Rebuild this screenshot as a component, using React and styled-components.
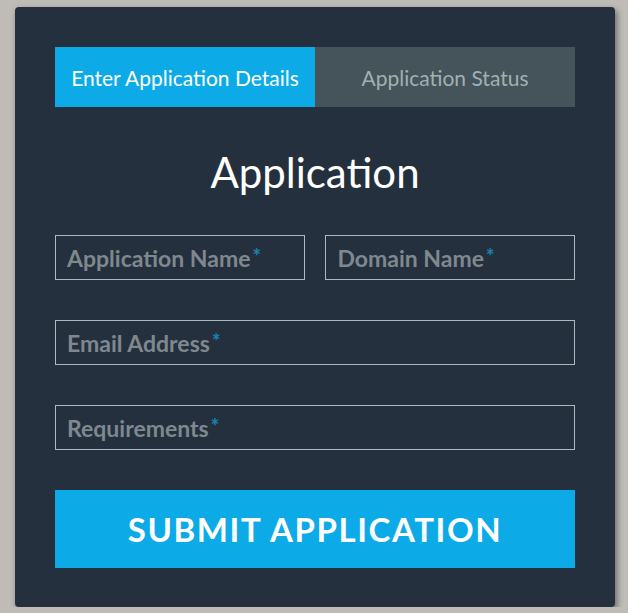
import React from 'react';
import styled, { createGlobalStyle } from 'styled-components';

const GlobalStyle = createGlobalStyle`
  body {
    margin: 0;
    background: #bfbbb7;
    font-family: Lato, "Liberation Sans", sans-serif;
  }
`;

const Card = styled.div`
  box-sizing: border-box;
  width: 600px;
  height: 600px;
  margin: 7px 0 0 15px;
  padding: 40px;
  background: #24303d;
  border-radius: 4px;
  box-shadow: 2px 3px 6px rgba(0, 0, 0, 0.45);
`;

const Tabs = styled.div`
  display: flex;
  height: 60px;
`;

const Tab = styled.button`
  flex: 1;
  border: none;
  margin: 0;
  padding: 0;
  font-family: Lato, sans-serif;
  font-size: 21px;
  background: ${(p) => (p.$active ? '#0cabe8' : '#45535b')};
  color: ${(p) => (p.$active ? '#ffffff' : '#a0b1b0')};
  cursor: pointer;
`;

const Title = styled.h1`
  margin: 45px 0 43px;
  font-family: Lato, sans-serif;
  font-weight: 400;
  font-size: 42px;
  line-height: 40px;
  color: #ffffff;
  text-align: center;
`;

const Row = styled.div`
  display: flex;
  justify-content: space-between;
  margin-bottom: 40px;
`;

const Field = styled.label`
  position: relative;
  display: block;
  width: ${(p) => (p.$half ? '48%' : '100%')};
  height: 45px;
`;

const Input = styled.input`
  box-sizing: border-box;
  width: 100%;
  height: 100%;
  margin: 0;
  padding: 0 12px;
  background: transparent;
  border: 1px solid #a9bcbc;
  color: #ffffff;
  font-family: Lato, sans-serif;
  font-size: 23px;
  outline: none;
`;

const Placeholder = styled.span`
  position: absolute;
  left: 12px;
  top: 0;
  bottom: 0;
  display: flex;
  align-items: center;
  font-weight: 700;
  font-size: 23px;
  color: #7f888f;
  pointer-events: none;
`;

const Star = styled.span`
  align-self: flex-start;
  margin: 13px 0 0 2px;
  font-weight: 900;
  font-size: 20px;
  line-height: 16px;
  color: #1683b3;
`;

const Submit = styled.button`
  display: block;
  width: 100%;
  height: 78px;
  margin: 0;
  border: none;
  background: #0cabe8;
  color: #ffffff;
  font-family: Lato, sans-serif;
  font-weight: 700;
  font-size: 33px;
  letter-spacing: 1.6px;
  cursor: pointer;
`;

const TextField = ({ label, half }) => {
  const [value, setValue] = React.useState('');
  return (
    <Field $half={half}>
      <Input value={value} onChange={(e) => setValue(e.target.value)} />
      {value === '' && (
        <Placeholder>
          {label}
          <Star>*</Star>
        </Placeholder>
      )}
    </Field>
  );
};

export default function App() {
  const [tab, setTab] = React.useState(0);
  return (
    <>
      <GlobalStyle />
      <Card>
        <Tabs>
          <Tab $active={tab === 0} onClick={() => setTab(0)}>
            Enter Application Details
          </Tab>
          <Tab $active={tab === 1} onClick={() => setTab(1)}>
            Application Status
          </Tab>
        </Tabs>
        <Title>Application</Title>
        <Row>
          <TextField label="Application Name" half />
          <TextField label="Domain Name" half />
        </Row>
        <Row>
          <TextField label="Email Address" />
        </Row>
        <Row>
          <TextField label="Requirements" />
        </Row>
        <Submit>SUBMIT APPLICATION</Submit>
      </Card>
    </>
  );
}
